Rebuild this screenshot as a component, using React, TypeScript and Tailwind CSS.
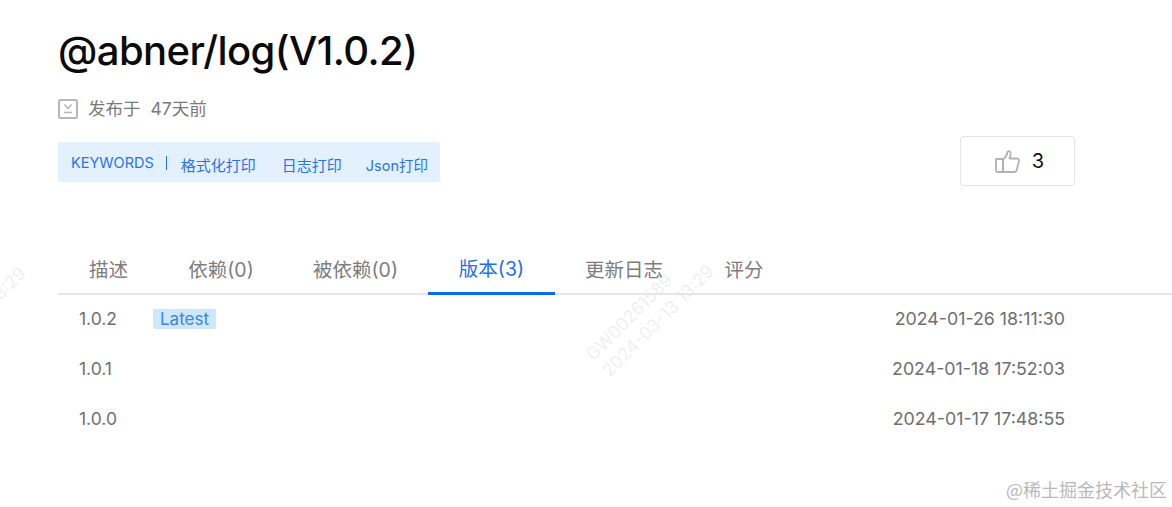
const FONT = "font-['Inter','Noto_Sans_CJK_SC',sans-serif]"

const TABS = [
  { label: '描述', width: 'w-[101px]', active: false },
  { label: '依赖(0)', width: 'w-[124px]', active: false },
  { label: '被依赖(0)', width: 'w-[145px]', active: false },
  { label: '版本(3)', width: 'w-[127px]', active: true },
  { label: '更新日志', width: 'w-[138px]', active: false },
  { label: '评分', width: 'w-[102px]', active: false },
]

const VERSIONS = [
  { version: '1.0.2', date: '2024-01-26 18:11:30', latest: true },
  { version: '1.0.1', date: '2024-01-18 17:52:03', latest: false },
  { version: '1.0.0', date: '2024-01-17 17:48:55', latest: false },
]

function ReleaseIcon() {
  return (
    <svg width="20" height="20" viewBox="0 0 20 20" fill="none" stroke="#b8b8b8" strokeWidth="2">
      <rect x="1" y="1" width="18" height="18" rx="1.5" />
      <path d="M6.5 5.5 10 9.5 13.5 5.5" strokeWidth="1.6" />
      <path d="M6 13.5h8" strokeWidth="1.6" />
    </svg>
  )
}

function ThumbIcon() {
  return (
    <svg width="25" height="23" viewBox="0 0 25 23" fill="none" stroke="#b2b2b2" strokeWidth="1.8" strokeLinejoin="round">
      <path d="M1 9h7v13H2.500A1.500 1.500 0 0 1 1 20.500z" />
      <path d="M8 9.500C10.500 7.500 12 5 12.500 2C12.800 0.700 15 0.700 15.500 2.500C16 4.500 15 6.500 14.500 8.500H22C23.500 8.500 24.200 9.800 23.800 11.300L21.800 19.800C21.500 21.200 20.700 22 19.200 22H8z" />
    </svg>
  )
}

function Watermark({ className }: { className: string }) {
  return (
    <div className={`absolute w-[164px] rotate-[-45deg] text-left text-[17.5px] leading-[23px] text-[#f0f0f0] whitespace-nowrap select-none ${className}`}>
      GW00261589
      <br />
      2024-03-13 13:29
    </div>
  )
}

export default function App() {
  return (
    <div className={`${FONT} relative w-[1172px] h-[507px] overflow-hidden bg-white`}>
      <Watermark className="left-[573px] top-[284px]" />
      <Watermark className="left-[-115px] top-[286px]" />

      <div className="relative pl-[58px] pt-[23px] pr-[97px]">
        <h1 className="text-[40px] leading-[56px] font-medium text-[#0a0a0a] tracking-[-0.55px]">@abner/log(V1.0.2)</h1>

        <div className="mt-[18px] flex items-center h-[24px] text-[17.5px] text-[#7a7a7a]">
          <ReleaseIcon />
          <span className="ml-[10px]">发布于</span>
          <span className="ml-[10px]">47天前</span>
        </div>

        <div className="mt-[21px] flex items-start justify-between">
          <div className="flex items-center w-[382px] h-[40px] rounded-[2px] bg-[#e3f0fe] pl-[13px] text-[14.5px] text-[#2a74e8]">
            <span className="mt-[1px]">KEYWORDS</span>
            <span className="ml-[12px] mt-[1px] h-[14px] w-px bg-[#2a74e8]" />
            <span className="ml-[14px] mt-[8px] text-[15px]">格式化打印</span>
            <span className="ml-[26px] mt-[8px] text-[15px]">日志打印</span>
            <span className="ml-[24px] mt-[8px]">Json打印</span>
          </div>
          <div className="-mt-[6px] flex items-center justify-center gap-[12px] w-[115px] h-[50px] rounded-[3px] border border-[#e4e4e4] pl-[4px] text-[20px] text-[#111]">
            <ThumbIcon />
            <span>3</span>
          </div>
        </div>

        <div className="mt-[64px] -mr-[97px] flex h-[45px] border-b-2 border-[#e6e6e8]">
          {TABS.map((tab) => (
            <div
              key={tab.label}
              className={`${tab.width} -mb-[2px] flex items-center justify-center pb-[3px] text-[19.5px] ${
                tab.active ? 'border-b-[3px] border-[#0a6cea] text-[#1f6fe5]' : 'text-[#7d7d7d]'
              }`}
            >
              {tab.label}
            </div>
          ))}
        </div>

        <div className="-mt-[1px] -mr-[97px] pr-[107px]">
          {VERSIONS.map((row) => (
            <div key={row.version} className="flex items-center h-[50px] pl-[21px] text-[17.5px] text-[#6f6f6f]">
              <span className="w-[74px]">{row.version}</span>
              {row.latest && (
                <span className="h-[20px] leading-[20px] px-[7px] rounded-[2px] bg-[#cde7fd] text-[17px] text-[#3c86d8]">Latest</span>
              )}
              <span className="ml-auto text-[17.8px]">{row.date}</span>
            </div>
          ))}
        </div>
      </div>

      <div className="absolute right-[5px] bottom-[6px] text-[18px] leading-[24px] text-[#b9b9b9] font-['Noto_Sans_CJK_SC',sans-serif]">
        @稀土掘金技术社区
      </div>
    </div>
  )
}
